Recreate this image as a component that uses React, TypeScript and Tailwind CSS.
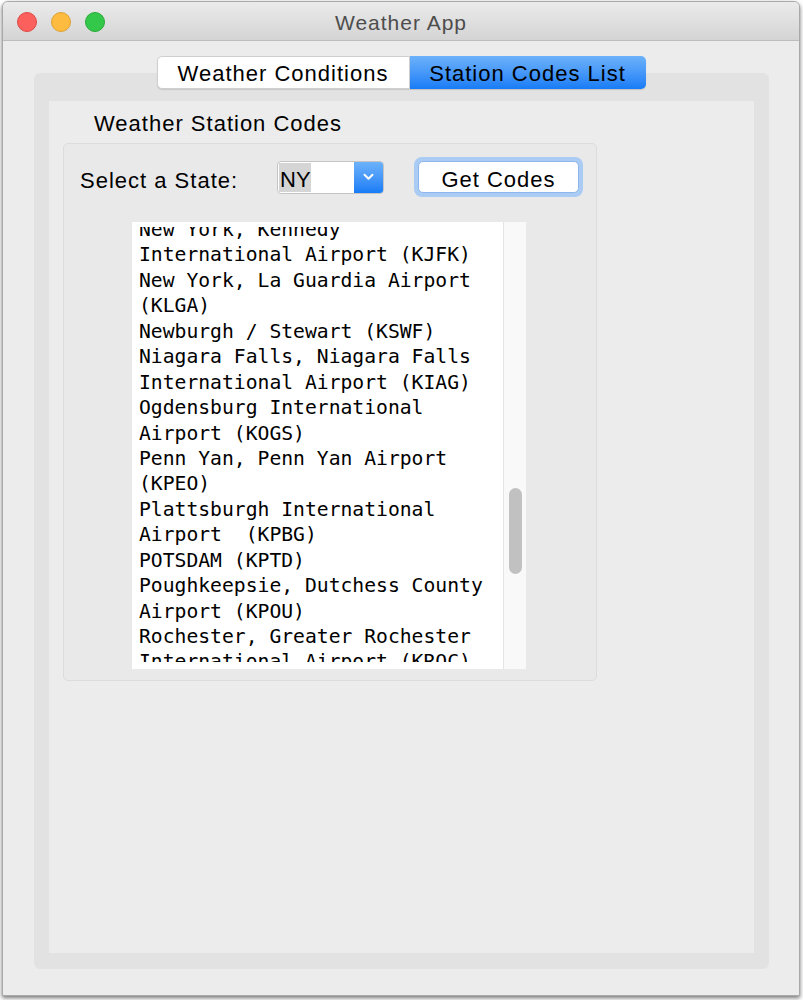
import React from "react";

const lines = [
  "New York, Kennedy",
  "International Airport (KJFK)",
  "New York, La Guardia Airport",
  "(KLGA)",
  "Newburgh / Stewart (KSWF)",
  "Niagara Falls, Niagara Falls",
  "International Airport (KIAG)",
  "Ogdensburg International",
  "Airport (KOGS)",
  "Penn Yan, Penn Yan Airport",
  "(KPEO)",
  "Plattsburgh International",
  "Airport  (KPBG)",
  "POTSDAM (KPTD)",
  "Poughkeepsie, Dutchess County",
  "Airport (KPOU)",
  "Rochester, Greater Rochester",
  "International Airport (KROC)",
];

export default function App() {
  return (
    <div className="w-[803px] h-[1000px] bg-white pl-[2px] pt-[1px] font-['Liberation_Sans',Arial,sans-serif] text-black">
      <div className="w-[798px] h-[995px] rounded-t-[6px] border border-[#a9a9a9] bg-[#ececec] shadow-[0_2px_4px_rgba(0,0,0,0.55)] flex flex-col overflow-hidden">
        {/* Title bar */}
        <div className="h-[39px] shrink-0 grid grid-cols-[1fr_auto_1fr] items-center border-b border-[#bdbdbd] bg-gradient-to-b from-[#ebebeb] to-[#d4d4d4] px-[14px]">
          <div className="flex gap-[14px] pt-[1px]">
            <div className="w-[20px] h-[20px] rounded-full bg-[#fc605c] border border-[#de4a45]" />
            <div className="w-[20px] h-[20px] rounded-full bg-[#fdbc40] border border-[#dea034]" />
            <div className="w-[20px] h-[20px] rounded-full bg-[#34c84a] border border-[#27aa35]" />
          </div>
          <div className="text-[21px] tracking-[1px] text-[#4d4d4d] leading-[24px] pt-[3px]">Weather App</div>
          <div />
        </div>

        {/* Content */}
        <div className="flex-1 flex flex-col">
          <div className="relative z-10 mt-[15px] flex justify-center h-[33px]">
            <div className="w-[253px] h-[33px] rounded-l-[5px] bg-white border border-[#cfcfcf] shadow-[0_1px_1px_rgba(0,0,0,0.12)] flex items-center justify-center text-[22px] tracking-[1px] leading-[26px] pt-[2px]">
              Weather Conditions
            </div>
            <div className="w-[236px] h-[33px] rounded-r-[5px] bg-gradient-to-b from-[#6cb2fa] to-[#167cf6] shadow-[0_1px_1px_rgba(0,0,0,0.15)] flex items-center justify-center text-[22px] tracking-[1px] leading-[26px] pt-[2px]">
              Station Codes List
            </div>
          </div>

          <div className="-mt-[16px] ml-[31px] w-[735px] h-[896px] rounded-[6px] bg-[#e2e2e2] pt-[28px] px-[15px] pb-[16px]">
            <div className="w-[705px] h-[852px] bg-[#ececec] flex flex-col">
              <div className="pl-[45px] pt-[10px] text-[22px] tracking-[1px] leading-[26px]">Weather Station Codes</div>

              <div className="ml-[14px] mt-[6px] w-[534px] h-[538px] rounded-[5px] border border-[#dcdcdc] bg-[#e9e9e9] flex flex-col">
                <div className="mt-[13px] h-[40px] flex items-center pl-[16px]">
                  <div className="w-[197px] mt-[8px] text-[22px] tracking-[1px] leading-[26px]">Select a State:</div>
                  <div className="w-[107px] h-[33px] flex rounded-[4px] overflow-hidden border border-[#c4c4c4] bg-white">
                    <div className="flex-1 p-[1px] flex">
                      <div className="w-[32px] h-full bg-[#d5d5d5] pl-[1px] flex items-center text-[22px] leading-[26px] pt-[5px]">NY</div>
                    </div>
                    <div className="w-[29px] h-full bg-gradient-to-b from-[#6cb2fa] to-[#167cf6] flex items-center justify-center">
                      <svg width="11" height="8" viewBox="0 0 11 8">
                        <path d="M1.5 1.8 L5.5 5.8 L9.5 1.8" fill="none" stroke="white" strokeWidth="2" strokeLinecap="round" strokeLinejoin="round" />
                      </svg>
                    </div>
                  </div>
                  <div className="ml-[30px] w-[169px] h-[40px] rounded-[8px] bg-[#a9cbf4] p-[4px]">
                    <div className="w-full h-full rounded-[5px] bg-white border border-[#8cb6ec] flex items-center justify-center text-[22px] tracking-[1px] leading-[26px] pt-[5px]">
                      Get Codes
                    </div>
                  </div>
                </div>

                <div className="ml-[68px] mt-[25px] w-[394px] h-[447px] flex">
                  <div className="w-[371px] h-full bg-white pt-[5px] pl-[7px]">
                    <div className="h-[435px] overflow-hidden">
                      <div className="-mt-[10px] font-['DejaVu_Sans_Mono',monospace] text-[19.7px] leading-[25.44px] text-black">
                        {lines.map((l, i) => (
                          <div key={i} className="whitespace-pre">{l}</div>
                        ))}
                      </div>
                    </div>
                  </div>
                  <div className="w-[23px] h-full border-l border-[#e4e4e4] bg-[#f9f9f9] pt-[266px] pl-[5px]">
                    <div className="w-[13px] h-[86px] rounded-full bg-[#c1c1c1]" />
                  </div>
                </div>
              </div>
            </div>
          </div>
        </div>
      </div>
    </div>
  );
}
